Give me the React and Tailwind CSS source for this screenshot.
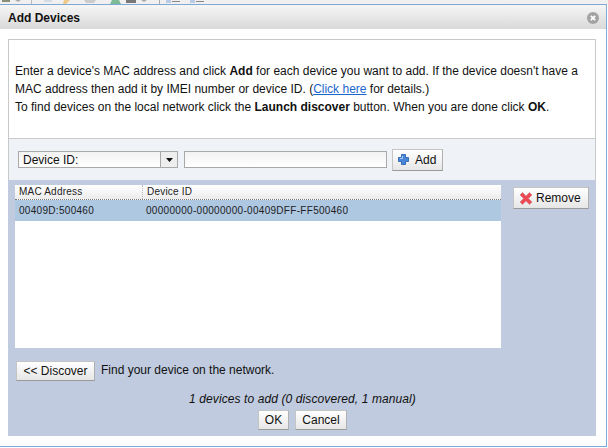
const font = { fontFamily: '"Liberation Sans", Arial, sans-serif' };

const btn =
  'flex items-center justify-center border border-[#c4c4c4] border-b-[#9a9a9a] border-r-[#b0b0b0] bg-gradient-to-b from-white to-[#e6e6e6] text-[#111] text-[12px] leading-none';

function PlusIcon() {
  return (
    <svg width="11" height="11" viewBox="0 0 11 11">
      <path d="M3.5.5h4v3h3v4h-3v3h-4v-3h-3v-4h3z" fill="#4a86d8" stroke="#3a6db8" strokeWidth="1" />
      <path d="M4.5 2v2.5H2" fill="none" stroke="#a9cbf2" strokeWidth="1" />
    </svg>
  );
}

function RemoveIcon() {
  return (
    <svg width="14" height="13" viewBox="0 0 14 13">
      <path
        d="M1 3l2.5-2.5L7 4 10.500.5 13 3 9.500 6.500 13 10l-2.500 2.500L7 9l-3.500 3.500L1 10l3.500-3.500z"
        fill="#ee4a55"
        stroke="#d9888e"
        strokeWidth="1"
      />
    </svg>
  );
}

function CloseIcon() {
  return (
    <svg width="12" height="12" viewBox="0 0 12 12">
      <circle cx="6" cy="6" r="6" fill="#a3a3a3" />
      <path d="M3.8 3.800l4.400 4.400M8.200 3.800l-4.400 4.400" stroke="#fff" strokeWidth="1.800" />
    </svg>
  );
}

function ToolbarStrip() {
  return (
    <div className="h-[4px] shrink-0 overflow-hidden bg-[#f0f0f0]">
      <svg width="608" height="4" viewBox="0 0 608 4">
        <rect x="2" y="0" width="8" height="2" fill="#8a8f78" />
        <path d="M15 0h6l-3 2z" fill="#aaa" />
        <rect x="31" y="0" width="1" height="4" fill="#bbb" />
        <rect x="44" y="0" width="8" height="2" fill="#d5dde4" />
        <path d="M64 0h6l-4 4h-3z" fill="#eec98a" />
        <path d="M84 0h12l-2 3h-8z" fill="#ccc" />
        <path d="M112 0h7l2 4h-11z" fill="#7dbb98" />
        <rect x="126" y="0" width="10" height="3" fill="#777" />
        <path d="M141 0h6l-3 2z" fill="#aaa" />
        <rect x="159" y="0" width="1" height="4" fill="#aaa" />
        <rect x="166" y="0" width="5" height="3" fill="#b9cbe5" />
        <rect x="172" y="1" width="8" height="1" fill="#888" />
        <rect x="190" y="0" width="5" height="3" fill="#b9cbe5" />
        <rect x="196" y="1" width="8" height="1" fill="#888" />
      </svg>
    </div>
  );
}

export default function App() {
  return (
    <div className="flex h-[448px] w-[608px] flex-col overflow-hidden bg-white" style={font}>
      <ToolbarStrip />
      <div className="flex h-[443px] w-[607px] flex-col border-r border-b border-t border-[#7fa9d2] bg-white">
        <div className="flex h-[24px] shrink-0 items-center justify-between bg-gradient-to-b from-[#f6f6f6] to-[#d9d9d9] pl-[8px] pr-[7px] pt-[2px]">
          <span className="text-[12px] font-bold text-[#111]">Add Devices</span>
          <CloseIcon />
        </div>

        <div className="mx-[8px] mt-[10px] flex h-[397px] w-[588px] flex-col">
          <div className="flex h-[100px] shrink-0 flex-col justify-center border border-[#c9c9c9] bg-white pl-[6px] text-[12px] leading-[18px] text-[#111]">
            <p>
              Enter a device's MAC address and click <b>Add</b> for each device you want to add. If the device doesn't have a
            </p>
            <p>
              MAC address then add it by IMEI number or device ID. (
              <span className="text-[#1a66cc] underline">Click here</span> for details.)
            </p>
            <p>
              To find devices on the local network click the <b>Launch discover</b> button. When you are done click <b>OK</b>.
            </p>
          </div>

          <div className="flex h-[41px] shrink-0 items-center border-x border-[#c9c9c9] bg-[#eff3f8] pl-[9px]">
            <div className="flex h-[17px] w-[160px] items-center border border-[#a9a9a9] bg-gradient-to-b from-[#f2f2f2] to-white pl-[4px] text-[12px] text-[#111]">
              <span className="flex-1">Device ID:</span>
              <span className="flex h-[15px] w-[17px] items-center justify-center border-l border-[#a9a9a9] bg-[#eee]">
                <svg width="7" height="4" viewBox="0 0 7 4">
                  <path d="M0 0h7L3.500 4z" fill="#111" />
                </svg>
              </span>
            </div>
            <div className="ml-[6px] h-[17px] w-[203px] border border-[#a9a9a9] bg-gradient-to-b from-[#f2f2f2] to-white" />
            <div className={`${btn} ml-[5px] h-[22px] w-[51px] gap-[6px] !justify-start pl-[5px]`}>
              <PlusIcon />
              <span>Add</span>
            </div>
          </div>

          <div className="flex min-h-0 flex-1 flex-col bg-[#c0cbdf] pl-[7px]">
            <div className="mt-[5px] flex">
              <div className="h-[163px] w-[486px] bg-white">
                <div className="flex h-[15px] border-b border-dotted border-[#777] bg-gradient-to-b from-white to-[#ececec] text-[10px] leading-[14px] tracking-[0.2px] text-[#222]">
                  <span className="w-[128px] border-r border-dotted border-[#bbb] pl-[4px]">MAC Address</span>
                  <span className="pl-[4px]">Device ID</span>
                </div>
                <div className="flex h-[21px] items-center bg-[#aec8e2] text-[10px] tracking-[0.3px] text-[#222]">
                  <span className="w-[128px] pl-[4px]">00409D:500460</span>
                  <span className="pl-[3px]">00000000-00000000-00409DFF-FF500460</span>
                </div>
              </div>
              <div className={`${btn} ml-[12px] mt-[2px] h-[22px] w-[76px] gap-[3px] !justify-start pl-[5px]`}>
                <RemoveIcon />
                <span>Remove</span>
              </div>
            </div>

            <div className="mt-[13px] flex items-center pl-[1px]">
              <div className={`${btn} h-[20px] w-[79px]`}>&lt;&lt; Discover</div>
              <span className="ml-[6px] -mt-[2px] text-[12px] text-[#111]">Find your device on the network.</span>
            </div>

            <p className="mt-[12px] pr-[6px] text-center text-[12px] italic leading-[13px] tracking-[0.1px] text-[#111]">
              1 devices to add (0 discovered, 1 manual)
            </p>
            <div className="mt-[4px] flex justify-center gap-[6px] pr-[6px]">
              <div className={`${btn} h-[20px] w-[31px]`}>OK</div>
              <div className={`${btn} h-[20px] w-[52px]`}>Cancel</div>
            </div>
          </div>
        </div>
      </div>
    </div>
  );
}
